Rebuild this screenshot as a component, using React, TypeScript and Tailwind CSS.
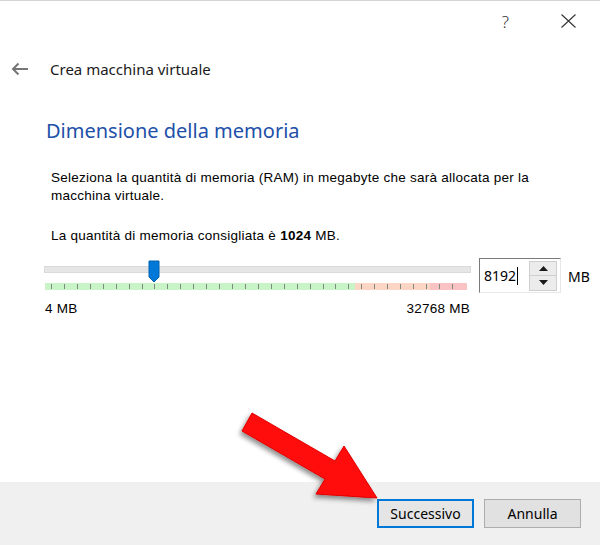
import React from 'react'

const uiFont = { fontFamily: '"Segoe UI", "Noto Sans", sans-serif' }
const bodyFont = { fontFamily: 'Tahoma, "Liberation Sans", sans-serif' }

const TICKS = Array.from({ length: 32 }, (_, i) => 7 + i * 12.93)

function TickBand() {
  return (
    <svg width="427" height="8" viewBox="0 0 427 8" className="block">
      <rect x="1" y="0" width="310" height="7" fill="#c8f4c8" />
      <rect x="311" y="0" width="75" height="7" fill="#fcd6c4" />
      <rect x="386" y="0" width="37" height="7" fill="#f9c3c3" />
      {TICKS.map((x) => (
        <rect key={x} x={Math.round(x)} y="1" width="1" height="5" fill="#7d8a7d" />
      ))}
    </svg>
  )
}

function Thumb() {
  return (
    <svg width="12" height="23" viewBox="0 0 12 23" className="absolute left-[104px] top-[2px]">
      <path d="M1 1 H11 V17 L6 22 L1 17 Z" fill="#0078d7" stroke="#0063b1" strokeWidth="1" />
    </svg>
  )
}

function SpinBox() {
  return (
    <div className="w-[82px] h-[35px] flex items-center border-t border-l border-[#7a7a7a] border-r border-b border-r-[#e8e8e8] border-b-[#e8e8e8] bg-white">
      <div className="flex-1 pl-[4px] flex items-center text-[14px] text-black" style={uiFont}>
        8192
        <span className="inline-block w-px h-[18px] bg-black ml-px" />
      </div>
      <div className="w-[28px] h-[30px] mr-[3px] flex flex-col border border-[#cfcfcf]">
        <div className="flex-1 flex items-center justify-center bg-[#ececec] border-b border-[#cfcfcf]">
          <svg width="9" height="5" viewBox="0 0 9 5">
            <path d="M0 5 L4.5 0 L9 5 Z" fill="#1a1a1a" />
          </svg>
        </div>
        <div className="flex-1 flex items-center justify-center bg-[#ececec]">
          <svg width="9" height="5" viewBox="0 0 9 5">
            <path d="M0 0 L9 0 L4.5 5 Z" fill="#1a1a1a" />
          </svg>
        </div>
      </div>
    </div>
  )
}

function RedArrow() {
  return (
    <svg width="600" height="545" viewBox="0 0 600 545" className="absolute inset-0 pointer-events-none">
      <defs>
        <filter id="shadow" x="-20%" y="-20%" width="140%" height="140%">
          <feGaussianBlur in="SourceAlpha" stdDeviation="2.5" />
          <feOffset dx="-2" dy="3" result="blur" />
          <feComponentTransfer>
            <feFuncA type="linear" slope="0.45" />
          </feComponentTransfer>
          <feMerge>
            <feMergeNode />
            <feMergeNode in="SourceGraphic" />
          </feMerge>
        </filter>
      </defs>
      <polygon
        points="252,412 335,460 344,445 377,497 316,493 325,478 242,430"
        fill="#ff0a0a"
        stroke="#e00000"
        strokeWidth="1"
        strokeLinejoin="round"
        filter="url(#shadow)"
      />
    </svg>
  )
}

export default function App() {
  return (
    <div className="relative w-[600px] h-[545px] bg-white border-t border-[#d5d5d5] flex flex-col overflow-hidden">
      {/* title bar */}
      <div className="h-10 flex items-center justify-end pr-[24px] gap-[52px] text-[#333]">
        <span className="text-[17px] font-light leading-none" style={uiFont}>?</span>
        <svg width="15" height="14" viewBox="0 0 15 14">
          <path d="M0.5 0.5 L14.5 13.5 M14.5 0.5 L0.5 13.5" stroke="#333" strokeWidth="1.1" />
        </svg>
      </div>

      {/* wizard header */}
      <div className="h-14 flex items-center pl-[11px]">
        <svg width="18" height="14" viewBox="0 0 18 14" className="mr-[21px]">
          <path d="M17 7 H2 M7.5 1.5 L2 7 L7.5 12.5" stroke="#767676" strokeWidth="2" fill="none" />
        </svg>
        <span className="text-[15px] text-[#1a1a1a]" style={uiFont}>Crea macchina virtuale</span>
      </div>

      <h1 className="mt-[20px] ml-[46px] text-[20px] leading-7 text-[#2150a8]" style={uiFont}>
        Dimensione della memoria
      </h1>

      <div className="ml-[51px] w-[500px] text-[13.5px] tracking-[0.25px] leading-[18px] text-black" style={bodyFont}>
        <p className="mt-[24px]">
          Seleziona la quantità di memoria (RAM) in megabyte che sarà allocata per la macchina virtuale.
        </p>
        <p className="mt-[22px]">
          La quantità di memoria consigliata è <b>1024</b> MB.
        </p>
      </div>

      <div className="mt-[13px] ml-[44px] flex items-start">
        <div className="relative w-[427px] h-[35px]">
          <div className="mt-[8px] h-[7px] bg-[#e6e6e6] border border-[#dadada]" />
          <div className="mt-[10px]">
            <TickBand />
          </div>
          <Thumb />
        </div>
        <div className="ml-[8px]">
          <SpinBox />
        </div>
        <span className="ml-[7px] mt-[8px] text-[14px] text-black" style={uiFont}>MB</span>
      </div>

      <div className="mt-[8px] ml-[45px] w-[425px] flex justify-between text-[13.5px] tracking-[0.25px] leading-4 text-black" style={bodyFont}>
        <span>4 MB</span>
        <span>32768 MB</span>
      </div>

      {/* button bar */}
      <div className="mt-auto h-[63px] bg-[#f0f0f0] flex items-start justify-end pt-[17px] pr-[19px] gap-[10px]">
        <button
          className="w-[97px] h-[29px] bg-[#e5e5e5] border-2 border-[#0078d7] text-[14px] text-black"
          style={uiFont}
        >
          Successivo
        </button>
        <button
          className="w-[97px] h-[29px] bg-[#e1e1e1] border border-[#adadad] text-[14px] text-black"
          style={uiFont}
        >
          Annulla
        </button>
      </div>

      <RedArrow />
    </div>
  )
}
